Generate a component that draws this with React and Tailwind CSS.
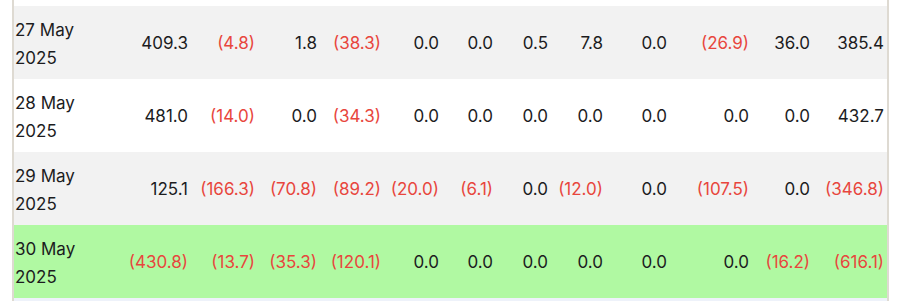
const widths = [
  "w-[100px]",
  "w-[77px]",
  "w-[67px]",
  "w-[62px]",
  "w-[64px]",
  "w-[58px]",
  "w-[54px]",
  "w-[55px]",
  "w-[55px]",
  "w-[64px]",
  "w-[82px]",
  "w-[61px]",
  "w-[74px]",
];

const rows = [
  {
    date: ["27 May", "2025"],
    bg: "bg-[#f2f2f2]",
    values: ["409.3", "(4.8)", "1.8", "(38.3)", "0.0", "0.0", "0.5", "7.8", "0.0", "(26.9)", "36.0", "385.4"],
  },
  {
    date: ["28 May", "2025"],
    bg: "bg-white",
    values: ["481.0", "(14.0)", "0.0", "(34.3)", "0.0", "0.0", "0.0", "0.0", "0.0", "0.0", "0.0", "432.7"],
  },
  {
    date: ["29 May", "2025"],
    bg: "bg-[#f2f2f2]",
    values: ["125.1", "(166.3)", "(70.8)", "(89.2)", "(20.0)", "(6.1)", "0.0", "(12.0)", "0.0", "(107.5)", "0.0", "(346.8)"],
  },
  {
    date: ["30 May", "2025"],
    bg: "bg-[#b0f9a2]",
    values: ["(430.8)", "(13.7)", "(35.3)", "(120.1)", "0.0", "0.0", "0.0", "0.0", "0.0", "0.0", "(16.2)", "(616.1)"],
  },
];

function Cell({ value }) {
  const negative = value.startsWith("(");
  return (
    <td
      className={`pr-[3px] text-right align-middle ${
        negative ? "text-[#e8463d]" : "text-[#1c1c1e]"
      }`}
    >
      {value}
    </td>
  );
}

export default function App() {
  return (
    <div
      className="w-[900px] h-[301px] bg-white overflow-hidden"
      style={{ fontFamily: "Inter, 'Noto Sans', sans-serif" }}
    >
      <div className="ml-[12px] w-[877px] h-full border-x-2 border-[#dedad2] flex flex-col">
        <div className="h-[6px] bg-white" />
        <table className="table-fixed border-collapse w-[873px] text-[17px] leading-[28px]">
          <colgroup>
            {widths.map((w, i) => (
              <col key={i} className={w} />
            ))}
          </colgroup>
          <tbody>
            {rows.map((row) => (
              <tr key={row.date[0]} className={`${row.bg} h-[73px]`}>
                <td className="pl-[1px] pt-[3px] text-left align-middle text-[#1c1c1e]">
                  {row.date[0]}
                  <br />
                  {row.date[1]}
                </td>
                {row.values.map((v, i) => (
                  <Cell key={i} value={v} />
                ))}
              </tr>
            ))}
          </tbody>
        </table>
        <div className="flex-1 bg-[#eef2fa]" />
      </div>
    </div>
  );
}
